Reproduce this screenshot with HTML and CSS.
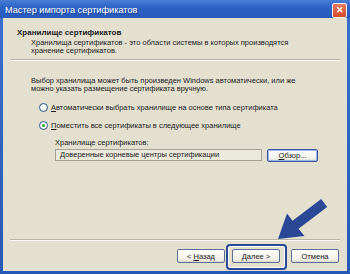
FILE: index.html
```html
<!DOCTYPE html>
<html>
  <head>
    <title>Мастер импорта сертификатов</title>
    <link rel="stylesheet" href="styles.css">
  </head>
  <body>
    <div class="window">
      <div class="titlebar">
        <span class="title">Мастер импорта сертификатов</span>
        <span class="close">&#10005;</span>
      </div>

      <div class="client">
        <!-- Header -->
        <div class="header">
          <div class="header-title">Хранилище сертификатов</div>
          <div class="header-sub">
            Хранилища сертификатов - это области системы в которых производятся<br>
            хранение сертификатов.
          </div>
        </div>
        <div class="sep header-sep"></div>

        <!-- Body -->
        <div class="body">
          <p class="intro">
            Выбор хранилища может быть произведен Windows автоматически, или же<br>
            можно указать размещение сертификата вручную.
          </p>
          <label class="radio-row first">
            <span class="radio"></span>
            <span><u>А</u>втоматически выбрать хранилище на основе типа сертификата</span>
          </label>
          <label class="radio-row">
            <span class="radio checked"></span>
            <span><u>П</u>оместить все сертификаты в следующее хранилище</span>
          </label>
          <div class="store-label">Хранилище сертификатов:</div>
          <div class="store-row">
            <div class="field">Доверенные корневые центры сертификации</div>
            <button class="btn btn-browse"><u>О</u>бзор...</button>
          </div>
        </div>

        <!-- Footer -->
        <div class="footer">
          <div class="sep"></div>
          <div class="buttons">
            <button class="btn">&lt; <u>Н</u>азад</button>
            <button class="btn btn-next"><u>Д</u>алее &gt;</button>
            <button class="btn btn-cancel">Отмена</button>
          </div>
        </div>
      </div>

      <!-- annotation -->
      <div class="ring"></div>
      <svg class="arrow" viewBox="0 0 350 274" width="350" height="274">
        <polygon points="278,239 287,213.6 292.5,220.7 321.2,198.9 327.2,206.9 298.5,228.7 304.5,236" fill="#2b4897" />
      </svg>
    </div>
  </body>
</html>
```

FILE: styles.css
```css
:root {
  --xp-blue: #2a5cb8;
  --face: #e3e0d0;
  --text: #1a1a1a;
}

body {
  margin: 0;
  font-family: "Liberation Sans", Arial, sans-serif;
  font-size: 7.5px;
  color: var(--text);
}

.window {
  position: relative;
  width: 350px;
  height: 274px;
  display: flex;
  flex-direction: column;
  background: linear-gradient(180deg, #3b6fcf 0%, #2758b6 100%);
  overflow: hidden;
}

.titlebar {
  height: 18px;
  display: flex;
  align-items: center;
  justify-content: space-between;
  padding: 0 3px 0 5px;
  background: linear-gradient(180deg, #4a7ed6 0%, #2d63c6 40%, #2659bb 100%);
}

.title {
  color: white;
  font-size: 9.2px;
  text-shadow: 1px 1px 0 rgba(0, 0, 0, 0.25);
  margin-top: 1px;
}

.close {
  width: 13px;
  height: 13px;
  margin-top: 2px;
  border: 1px solid #f2f2f2;
  border-radius: 2px;
  background: linear-gradient(180deg, #e8795e 0%, #d24c2c 100%);
  color: white;
  font-size: 9px;
  font-weight: bold;
  line-height: 13px;
  text-align: center;
}

.client {
  flex: 1;
  margin: 0 3px 3px;
  background: var(--face);
  display: flex;
  flex-direction: column;
}

.header {
  padding: 10px 0 0 14px;
}

.header-title {
  font-size: 8px;
  font-weight: bold;
  line-height: 10px;
}

.header-sub {
  margin: 1px 0 0 14px;
  line-height: 8px;
}

.sep {
  height: 1px;
  background: #b9b6a6;
  border-bottom: 1px solid #fbfaf6;
}

.header-sep {
  margin: 4px 7px 0;
}

.body {
  padding-left: 28px;
}

.intro {
  margin: 16px 0 0;
  line-height: 8px;
}

.radio-row {
  display: flex;
  align-items: center;
  gap: 3px;
  height: 10px;
  margin: 8px 0 0 8px;
}

.radio-row.first {
  margin-top: 9px;
}

.radio {
  width: 7px;
  height: 7px;
  border: 1px solid #2a5a8e;
  border-radius: 50%;
  background: radial-gradient(circle, #ffffff 40%, #dedbd0 100%);
  display: flex;
  align-items: center;
  justify-content: center;
}

.radio.checked::after {
  content: "";
  width: 3px;
  height: 3px;
  border-radius: 50%;
  background: #2ba52b;
}

.store-label {
  margin: 9px 0 0 24px;
  line-height: 8px;
}

.store-row {
  display: flex;
  align-items: flex-start;
  gap: 5px;
  margin: 2px 0 0 24px;
}

.field {
  width: 197px;
  height: 10px;
  padding: 0 4px;
  line-height: 10px;
  background: #ebe8dc;
  border: 1px solid #a3a197;
}

.btn {
  font-family: inherit;
  font-size: 7.5px;
  color: var(--text);
  width: 48px;
  height: 14px;
  padding: 0;
  border: 1px solid #5a6d93;
  border-radius: 2px;
  background: linear-gradient(180deg, #ffffff 0%, #f1efe7 80%, #dcd8cc 100%);
}

.btn-browse {
  width: 51px;
  height: 13px;
  border-color: #3b55a0;
  box-shadow: inset 0 0 0 1px #9bb3e6;
}

.footer {
  margin-top: auto;
}

.footer .sep {
  margin: 0 7px;
}

.buttons {
  display: flex;
  justify-content: flex-end;
  gap: 7px;
  padding: 8px 8px 8px 0;
}

.btn-cancel {
  margin-left: 4px;
}

.ring {
  position: absolute;
  left: 226px;
  top: 244px;
  width: 57px;
  height: 22px;
  border: 2px solid #2b4897;
  border-radius: 4px;
  box-shadow: inset 0 0 0 1px #ffffff;
}

.arrow {
  position: absolute;
  left: 0;
  top: 0;
  pointer-events: none;
}
```
